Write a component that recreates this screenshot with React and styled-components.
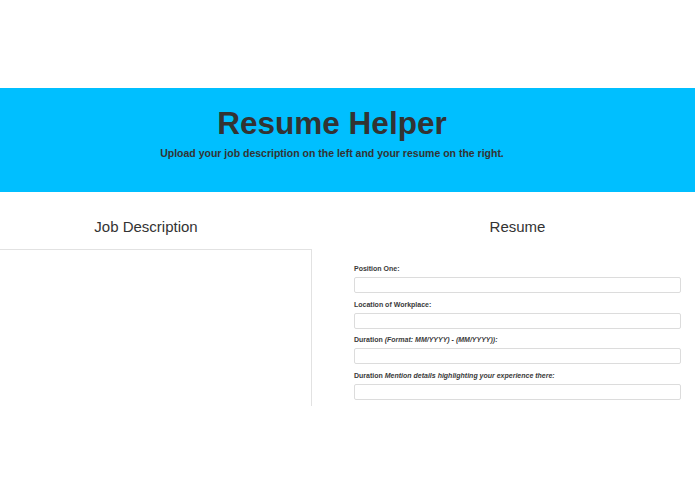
import React from "react";
import styled, { createGlobalStyle } from "styled-components";

const Global = createGlobalStyle`
  html, body { margin: 0; padding: 0; background: #fff; overflow: hidden; }
  body { font-family: "Liberation Sans", Arial, sans-serif; color: #333; }
  * { box-sizing: border-box; }
`;

const Page = styled.div`
  width: 695px;
  height: 494px;
  padding-top: 88px;
  overflow: hidden;
`;

const Banner = styled.header`
  height: 104px;
  background: #00bfff;
  padding: 20px 31px 0 0;
  text-align: center;
  color: #333;
`;

const Title = styled.h1`
  margin: 0;
  font-size: 31.5px;
  line-height: 1;
  font-weight: 700;
`;

const Subtitle = styled.p`
  margin: 7px 0 0;
  font-size: 10.5px;
  line-height: 1.2;
  font-weight: 700;
`;

const Main = styled.main`
  display: grid;
  grid-template-columns: 332px 355px;
  column-gap: 28px;
  margin-left: -20px;
  width: 715px;
  padding-top: 25px;
`;

const Column = styled.section`
  display: flex;
  flex-direction: column;
  padding: ${(p) => p.$pad || "0"};
`;

const Heading = styled.h2`
  margin: 0;
  font-size: 15px;
  line-height: 20px;
  font-weight: 400;
  text-align: center;
  color: #333;
`;

const TextBox = styled.textarea`
  margin-top: 12px;
  height: 157px;
  width: 100%;
  border: 1px solid #e2e2e2;
  border-bottom: none;
  resize: none;
  outline: none;
  background: #fff;
`;

const Form = styled.form`
  margin-top: 27px;
  display: flex;
  flex-direction: column;
`;

const Field = styled.div`
  display: flex;
  flex-direction: column;
  gap: 3px;
  margin-bottom: 6.5px;
`;

const Label = styled.label`
  font-size: 7px;
  line-height: 10px;
  font-weight: 700;
  color: #3a3a3a;
  em { font-style: italic; }
`;

const Input = styled.input`
  height: 16px;
  width: 100%;
  border: 1px solid #dcdcdc;
  border-radius: 2px;
  outline: none;
  background: #fff;
`;

const fields = [
  { label: "Position One:" },
  { label: "Location of Workplace:" },
  { label: "Duration", em: "(Format: MM/YYYY) - (MM/YYYY)):" },
  { label: "Duration", em: "Mention details highlighting your experience there:" },
];

export default function App() {
  return (
    <Page>
      <Global />
      <Banner>
        <Title>Resume Helper</Title>
        <Subtitle>Upload your job description on the left and your resume on the right.</Subtitle>
      </Banner>
      <Main>
        <Column>
          <Heading>Job Description</Heading>
          <TextBox />
        </Column>
        <Column $pad="0 14px">
          <Heading>Resume</Heading>
          <Form>
            {fields.map((f, i) => (
              <Field key={i}>
                <Label>
                  {f.label}
                  {f.em && (
                    <>
                      {" "}
                      <em>{f.em}</em>
                    </>
                  )}
                </Label>
                <Input type="text" />
              </Field>
            ))}
          </Form>
        </Column>
      </Main>
    </Page>
  );
}
